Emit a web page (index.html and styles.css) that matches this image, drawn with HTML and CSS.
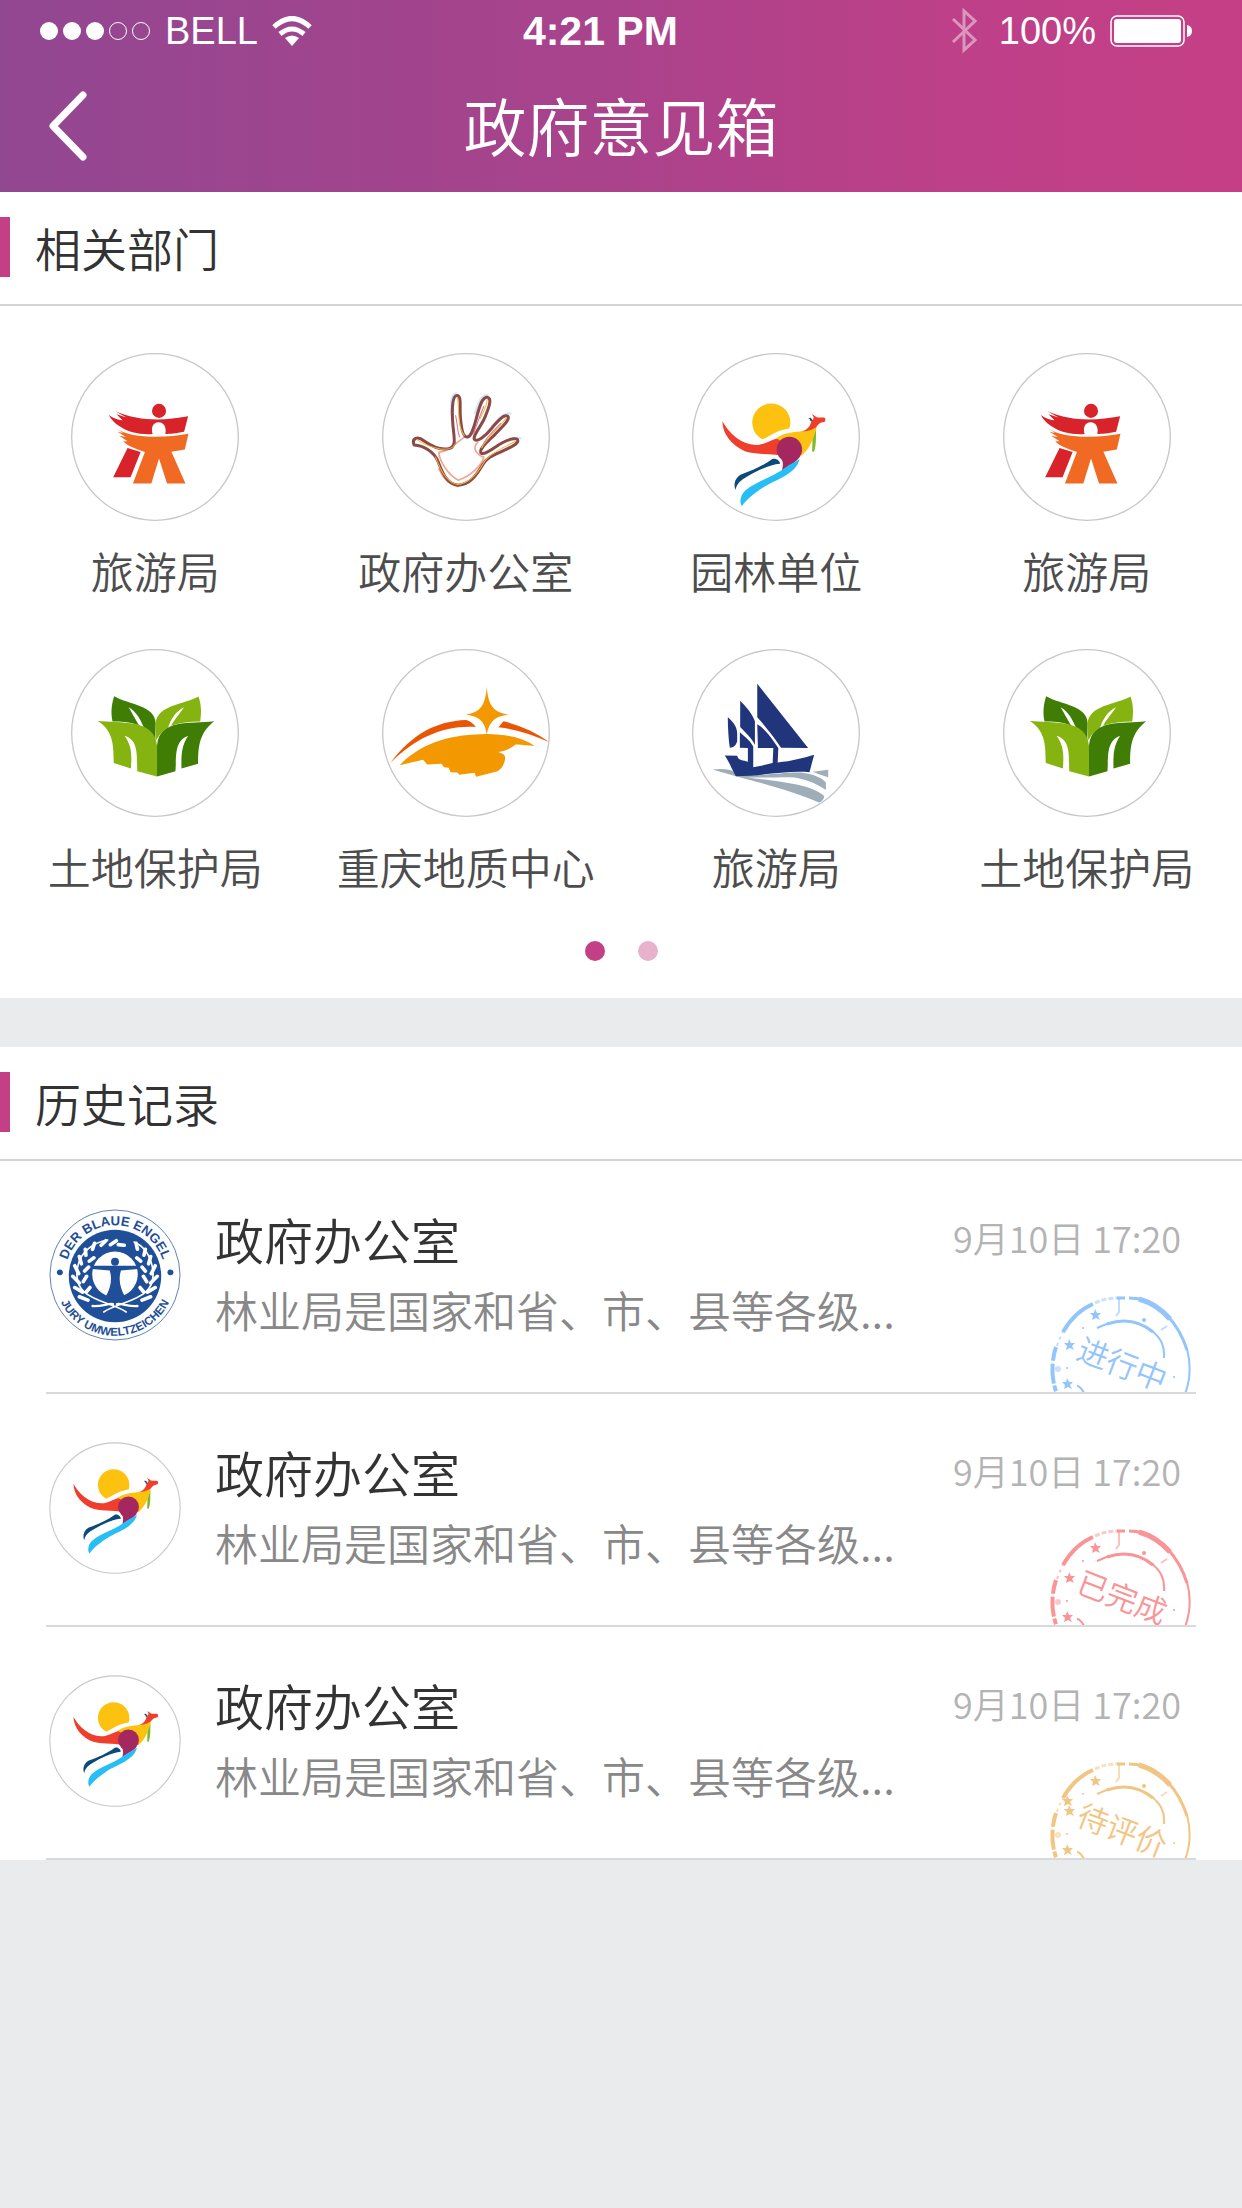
FILE: index.html
```html
<!DOCTYPE html>
<html lang="zh-CN">
<head>
<meta charset="utf-8">
<meta name="viewport" content="width=device-width, initial-scale=1">
<title>政府意见箱</title>
<link rel="stylesheet" href="styles.css">
</head>
<body>
<svg class="defs" aria-hidden="true">
  <symbol id="tour" viewBox="36 39 502 502">
    <circle class="ring" cx="287" cy="290" r="249"/>
    <circle cx="299" cy="212" r="21" fill="#d8232a"/>
    <path fill="#d8232a" d="M149 224C165 235 180 240 190 240L172 222 202 232 168 213C240 243 310 242 386 228L374 274C350 279 330 280 318 281 322 262 314 246 298 246 281 246 274 262 280 281 245 284 205 275 185 260 168 250 158 240 149 224ZM205 323L244 335 214 410 162 410Z"/>
    <path fill="#f06a23" d="M168 262C200 283 240 289 290 289 325 289 355 286 387 280L376 327 336 334 378 429 323 429 299 354 276 429 221 429 257 335C235 328 205 318 192 303L205 303 180 286 200 290 175 274 192 278Z"/>
  </symbol>
  <symbol id="hand" viewBox="36 45 502 502">
    <circle class="ring" cx="287" cy="296" r="249"/>
    <g fill="none" stroke-linejoin="round" stroke-linecap="round">
      <path stroke="#cfe8f8" stroke-width="7" d="M258 166C240 168 243 200 243 230M350 170C332 170 322 200 314 225M420 226C400 222 390 240 366 262M450 300C436 294 415 308 396 314"/>
      <path stroke="#f4a590" stroke-width="5" d="M280 298C252 318 238 336 206 342 208 372 236 410 264 425 300 412 334 382 340 356 318 350 304 328 322 312M206 392C222 425 240 440 262 444"/>
      <path stroke="#8a4a4a" stroke-width="9" d="M132 320C124 300 142 292 162 308C188 326 218 336 238 330C258 324 252 300 248 262C245 225 244 172 260 172C274 172 268 205 270 232C272 262 276 296 290 296C304 296 310 268 318 240C326 210 334 176 350 177C366 180 356 206 344 236C334 262 306 292 312 303C322 312 344 294 362 272C380 250 400 226 412 234C420 244 396 264 374 288C352 310 324 332 332 344C342 352 366 330 394 314C420 300 442 296 442 308C440 320 412 330 388 342C360 354 348 360 336 380C318 410 300 438 264 440C226 438 214 394 202 366C190 340 162 322 132 320Z"/>
      <path stroke="#f5b63a" stroke-width="3" d="M140 304C180 330 240 345 254 318M262 178C266 210 262 270 282 291M350 182C352 200 336 225 330 240M408 238C392 262 344 306 334 328M436 308C400 328 354 346 338 376C318 410 290 436 262 438C224 430 208 386 196 356"/>
      <path stroke="#d9738c" stroke-width="3" d="M256 232C262 260 262 285 268 296M340 205C330 230 320 255 310 285M390 256C372 276 348 296 338 318"/>
    </g>
  </symbol>
  <symbol id="kangaroo" viewBox="39 29 502 502">
    <circle cx="276" cy="237" r="57" fill="#fdc20f"/>
    <path fill="none" stroke="#fff" stroke-width="20" d="M240 302C275 292 290 264 350 262"/>
    <path fill="#f03e2d" d="M130 233C150 270 185 302 230 304 260 304 280 282 325 278L330 340C290 328 240 334 205 325 165 312 130 275 130 233Z"/>
    <path fill="#fdc20f" d="M290 284C330 255 378 272 412 247 404 285 390 315 366 336L320 300Z"/>
    <path fill="#f03e2d" d="M367 263C386 258 393 246 396 232 403 225 406 222 397 212 404 214 411 222 416 222L434 222C440 226 439 236 430 236 420 236 414 247 408 252 396 259 382 263 367 263Z"/>
    <path fill="#0c4a7b" d="M387 224C391 220 398 223 398 231L395 234C391 232 394 227 387 224Z"/>
    <path fill="#7db928" d="M410 256C409 280 411 300 404 324L398 323 399 290Z"/>
    <circle cx="330" cy="317" r="38" fill="#a5275f"/>
    <path fill="#a5275f" d="M303 342C312 352 312 362 308 380 330 366 352 355 360 340Z"/>
    <path fill="#0c4a7b" d="M279 346C288 342 302 350 302 360 270 362 225 385 198 402 180 412 172 424 169 438 163 424 166 404 184 393 218 380 248 368 279 346Z"/>
    <path fill="#27bdf5" d="M361 345C350 392 290 406 250 432 215 456 202 468 188 487 180 475 183 452 200 438 240 408 285 398 318 371 332 360 348 357 361 345Z"/>
  </symbol>
  <symbol id="leaf" viewBox="94 23 502 502">
    <circle class="ring" cx="345" cy="274" r="249"/>
    <path fill="#3f7d05" d="M223 164C268 190 345 190 347 245L346 298C335 280 322 268 314 262 302 235 290 210 266 197 280 220 290 240 298 252 270 240 240 240 218 240 212 210 216 185 223 164Z"/>
    <path fill="#85b410" d="M475 165C484 190 484 215 480 240 450 240 420 244 393 252 402 235 420 215 432 197 405 210 392 235 384 258 370 264 358 280 348 296L347 245C352 190 430 190 475 165Z"/>
    <path fill="#85b410" d="M174 238C240 245 345 230 351 312L351 404 292 388C290 345 298 295 254 282 278 315 275 345 273 380L222 364C220 320 225 270 174 238Z"/>
    <path fill="#3f7d05" d="M522 239C475 275 474 320 474 366L424 380C424 345 422 315 444 282 400 298 410 350 406 388L351 404 351 312C358 230 450 248 522 239Z"/>
  </symbol>
  <symbol id="geology" viewBox="37 35 502 502">
    <circle class="ring" cx="288" cy="286" r="249"/>
    <path fill="#f39800" d="M350 148C354 205 372 225 414 231 376 237 358 250 350 290 344 250 326 237 288 231 330 225 346 205 350 148Z"/>
    <path fill="#ea5504" d="M63 374C125 290 200 250 288 247 302 250 312 260 317 268 225 262 140 298 63 374ZM400 251C445 262 500 285 536 313 485 290 435 274 385 269Z"/>
    <path fill="#f39800" d="M90 382C160 310 250 290 350 289 410 290 455 300 493 324 470 325 450 318 435 321 420 334 400 342 385 343 400 350 408 350 404 368 400 385 392 396 380 401L318 417 314 405 268 411 262 404 242 403 236 390 222 388 215 378 172 380 160 366Z"/>
  </symbol>
  <symbol id="ship" viewBox="69 29 502 502">
    <circle class="ring" cx="320" cy="280" r="249"/>
    <path fill="#9fadb8" d="M130 389C160 386 180 387 200 398 250 415 340 395 395 398 430 402 460 415 469 428L469 450C440 430 400 413 360 412 310 412 260 415 230 412 320 425 420 430 464 468 464 478 455 486 448 488 380 455 260 425 190 406ZM430 396L476 390 476 412C460 408 445 402 430 396Z"/>
    <path fill="#20357c" d="M264 133L416 325 335 324C320 300 290 262 264 233ZM213 184C228 200 245 215 257 245L257 316C250 298 230 280 213 262ZM176 233C190 245 204 260 204 282L204 305C200 318 194 324 182 324 178 300 176 260 176 233ZM264 254C280 262 305 290 327 325L325 368C368 364 400 355 434 345L420 397C350 392 280 408 200 409 186 385 180 365 167 347L204 348C208 364 222 360 236 366L236 325 212 324 212 278C225 290 240 300 252 320L252 382C270 378 290 376 310 370L312 325 266 325Z"/>
  </symbol>
  <symbol id="stamp" viewBox="0 0 144 98">
    <g fill="none" stroke="currentColor">
      <path stroke-width="4" d="M14 38C22 24 32 15 44 10"/>
      <path stroke-width="3" opacity=".5" stroke-dasharray="5 2" d="M46 9C54 5 62 4 70 4"/>
      <path stroke-width="3" d="M68 4H76M80 4C90 4 98 6 106 11"/>
      <path stroke-width="5" d="M90 5C104 9 114 17 121 25"/>
      <path stroke-width="3" d="M118 21C128 32 134 43 138 56"/>
      <path stroke-width="2" d="M138 55C142 70 142 84 136 100"/>
      <path stroke-width="4" stroke-dasharray="14 3 20 2 6 3" d="M7 53C2 68 2 85 8 100"/>
      <path stroke-width="2" opacity=".6" stroke-dasharray="3 4" d="M8 52C10 46 12 42 14 38"/>
      <path stroke-width="3" d="M58 30C76 24 92 28 104 38"/>
      <path stroke-width="2" d="M48 34L60 29M102 36C112 44 116 52 115 64M28 92C32 92 34 98 36 100"/>
      <path stroke-width="2" opacity=".6" d="M70 4V18L67 22M112 36L118 32"/>
    </g>
    <g fill="currentColor">
      <circle cx="95" cy="26" r="2"/><circle cx="125" cy="83" r="1"/><circle cx="18" cy="74" r="1"/><circle cx="34" cy="34" r="1"/><circle cx="9" cy="75" r="3" opacity=".5"/>
      <path id="star" d="M46 15L48 19 52 19 49 22 51 26 47 24 43 26 44 22 41 19 45 19Z"/>
      <use href="#star" x="-26" y="30"/>
      <use href="#star" x="-28" y="69"/>
    </g>
  </symbol>
</svg>

<header class="header">
  <div class="status">
    <div class="status-side">
      <svg class="signal" viewBox="0 0 112 20" aria-hidden="true"><g fill="#fff"><circle cx="10" cy="10" r="9"/><circle cx="33" cy="10" r="9"/><circle cx="56" cy="10" r="9"/></g><g fill="none" stroke="#fff"><circle cx="79" cy="10" r="8.5"/><circle cx="102" cy="10" r="8.5"/></g></svg>
      <span>BELL</span>
      <svg class="wifi" viewBox="0 0 40 30" aria-hidden="true"><g fill="none" stroke="#fff" stroke-width="5"><path d="M2 11Q20-6 38 11"/><path d="M8 18Q20 8 32 18"/></g><path fill="#fff" d="M20 30L13 22Q20 17 27 22Z"/></svg>
    </div>
    <span class="clock">4:21 PM</span>
    <div class="status-side status-right">
      <svg class="bluetooth" viewBox="0 0 26 46" aria-hidden="true"><path fill="none" stroke="#fff" stroke-opacity=".45" stroke-width="3" d="M2 11L24 32 13 42V3L24 13 2 34"/></svg>
      <span>100%</span>
      <svg class="battery" viewBox="0 0 82 32" aria-hidden="true"><rect x="1" y="1" width="73" height="30" rx="6" fill="none" stroke="#fff" stroke-width="1.5"/><rect x="4" y="4" width="67" height="24" rx="3" fill="#fff"/><path fill="#fff" d="M77 10Q82 11 82 16T77 22Z"/></svg>
    </div>
  </div>
  <nav class="nav">
    <button class="back" type="button" aria-label="返回"><svg viewBox="0 0 40 70" aria-hidden="true"><path fill="none" stroke="#fff" stroke-width="7" stroke-linecap="round" stroke-linejoin="round" d="M35 4L5 35 35 66"/></svg></button>
    <h1>政府意见箱</h1>
  </nav>
</header>

<main>
  <section class="panel">
    <h2>相关部门</h2>
    <div class="departments">
      <a href="#"><svg><use href="#tour"/></svg>旅游局</a>
      <a href="#"><svg><use href="#hand"/></svg>政府办公室</a>
      <a href="#"><svg viewBox="39 29 502 502"><circle class="ring" cx="290" cy="280" r="249"/><use href="#kangaroo" x="39" y="29" width="502" height="502"/></svg>园林单位</a>
      <a href="#"><svg><use href="#tour"/></svg>旅游局</a>
      <a href="#"><svg><use href="#leaf"/></svg>土地保护局</a>
      <a href="#"><svg><use href="#geology"/></svg>重庆地质中心</a>
      <a href="#"><svg><use href="#ship"/></svg>旅游局</a>
      <a href="#"><svg><use href="#leaf"/></svg>土地保护局</a>
    </div>
    <div class="pager">
      <button class="dot dot-active" type="button" aria-label="第1页"></button>
      <button class="dot" type="button" aria-label="第2页"></button>
    </div>
  </section>

  <section class="panel">
    <h2>历史记录</h2>
    <ul class="records">
      <li><a class="record" href="#">
        <svg class="avatar" viewBox="58 60 400 400">
          <circle cx="258" cy="260" r="197" fill="#fff" stroke="#5b82b4" stroke-width="3"/>
          <circle cx="258" cy="263" r="140" fill="#1f4f98"/>
          <circle cx="258" cy="258" r="69" fill="#fff"/>
          <circle cx="91" cy="252" r="9" fill="#1f4f98"/><circle cx="426" cy="252" r="9" fill="#1f4f98"/>
          <circle cx="258" cy="220" r="12" fill="#1f4f98"/>
          <path fill="#1f4f98" d="M188 232H328V242L276 246C268 270 272 300 290 328H228C246 300 250 270 242 246L188 242Z"/>
          <g fill="none" stroke="#fff" stroke-linecap="round">
            <path stroke-width="5" d="M292 372C240 335 120 340 146 230 156 190 190 162 236 154M224 372C276 335 396 340 370 230 360 190 340 170 316 160"/>
            <path stroke-width="11" d="M176 336L150 326M160 312L136 298M150 284L130 264M148 256L136 232M156 226L150 204M170 200L168 182M190 182L196 164M216 170L230 156M244 168L262 156M172 310L182 298M162 280L172 264M166 248L178 236M180 218L194 208M340 336L366 326M356 312L380 298M366 284L386 264M368 256L380 232M360 226L366 204M346 200L350 182M326 182L322 164M344 310L334 298M354 280L344 264M350 248L340 236M336 218L324 208M268 168L286 170"/>
            <path stroke-width="7" d="M190 354C220 356 236 345 252 348M326 354C296 356 280 345 264 348"/>
          </g>
          <path id="arc-top" fill="none" d="M107 260A151 151 0 0 1 409 260"/>
          <path id="arc-bottom" fill="none" d="M74 260A184 184 0 0 0 442 260"/>
          <text class="seal-text"><textPath href="#arc-top" startOffset="50%" text-anchor="middle">DER BLAUE ENGEL</textPath></text>
          <text class="seal-text seal-text-small"><textPath href="#arc-bottom" startOffset="50%" text-anchor="middle">JURY UMWELTZEICHEN</textPath></text>
        </svg>
        <div class="summary"><h3>政府办公室</h3><p>林业局是国家和省、市、县等各级...</p></div>
        <div class="state ongoing"><time>9月10日 17:20</time>
          <svg class="stamp" viewBox="0 0 144 98"><use href="#stamp"/><text x="73" y="82" transform="rotate(21 73 71)">进行中</text></svg></div>
      </a></li>
      <li><a class="record" href="#">
        <svg class="avatar" viewBox="41 81 480 480"><circle class="ring" cx="281" cy="321" r="237"/><use href="#kangaroo" x="39" y="29" width="502" height="502"/></svg>
        <div class="summary"><h3>政府办公室</h3><p>林业局是国家和省、市、县等各级...</p></div>
        <div class="state done"><time>9月10日 17:20</time>
          <svg class="stamp" viewBox="0 0 144 98"><use href="#stamp"/><text x="73" y="82" transform="rotate(21 73 71)">已完成</text></svg></div>
      </a></li>
      <li><a class="record" href="#">
        <svg class="avatar" viewBox="41 81 480 480"><circle class="ring" cx="281" cy="321" r="237"/><use href="#kangaroo" x="39" y="29" width="502" height="502"/></svg>
        <div class="summary"><h3>政府办公室</h3><p>林业局是国家和省、市、县等各级...</p></div>
        <div class="state pending"><time>9月10日 17:20</time>
          <svg class="stamp" viewBox="0 0 144 98"><use href="#stamp"/><use href="#star" x="-28" y="20"/><text x="73" y="82" transform="rotate(21 73 71)">待评价</text></svg></div>
      </a></li>
    </ul>
  </section>
</main>
</body>
</html>
```
FILE: styles.css
```css
* {
  box-sizing: border-box;
}

body {
  margin: 0;
  background: #e9ebed;
  color: #333;
  font-family: "Noto Sans CJK SC", sans-serif;
  font-weight: 350;
}

h1, h2, h3, p, ul {
  margin: 0;
  padding: 0;
  font-weight: inherit;
  list-style: none;
}

a {
  color: inherit;
  text-decoration: none;
}

button {
  padding: 0;
  border: 0;
  background: none;
}

svg {
  display: block;
}

.defs {
  position: absolute;
  width: 0;
  height: 0;
}

.ring {
  fill: #fff;
  stroke: #c8c8c8;
  stroke-width: 4px;
}

/* Header */
.header {
  background: linear-gradient(90deg, #924791, #a9438c 48%, #bd4088 76%, #c53f86);
  color: #fff;
}

.status {
  display: grid;
  grid-template-columns: 16fr auto 17fr;
  align-items: center;
  height: 60px;
  padding: 2px 50px 0 39px;
  font: 38px/58px "Liberation Sans", Arial, sans-serif;
}

.status-side {
  display: flex;
  align-items: center;
  gap: 14px;
}

.status-right {
  justify-content: flex-end;
}

.clock {
  font-size: 41px;
  font-weight: bold;
}

.signal {
  width: 112px;
  height: 20px;
}

.wifi {
  width: 40px;
  height: 30px;
}

.bluetooth {
  width: 26px;
  height: 46px;
  margin-right: 8px;
}

.battery {
  width: 82px;
  height: 32px;
}

.nav {
  display: grid;
  grid-template-columns: 96px 1fr 96px;
  align-items: center;
  height: 132px;
}

.back {
  padding-left: 48px;
}

.back svg {
  width: 40px;
  height: 70px;
}

.nav h1 {
  font-size: 63px;
  line-height: 92px;
  text-align: center;
  padding-bottom: 4px;
}

/* Sections */
.panel {
  margin-bottom: 49px;
  background: #fff;
}

.panel h2 {
  display: flex;
  align-items: center;
  height: 114px;
  padding-bottom: 2px;
  border-bottom: 2px solid #d2d3d4;
  font-size: 46px;
  line-height: 60px;
}

.panel h2::before {
  content: "";
  width: 10px;
  height: 60px;
  margin-right: 25px;
  background: #c33f86;
}

.departments {
  display: grid;
  grid-template-columns: repeat(4, 1fr);
  row-gap: 44px;
  padding-top: 47px;
}

.departments a {
  display: flex;
  flex-direction: column;
  align-items: center;
  gap: 14px;
  color: #4d4d4d;
  font-size: 43px;
  line-height: 70px;
  white-space: nowrap;
}

.departments svg {
  width: 168px;
  height: 168px;
}

.pager {
  display: flex;
  justify-content: center;
  gap: 33px;
  padding: 40px 0 37px;
}

.dot {
  width: 20px;
  height: 20px;
  border-radius: 50%;
  background: #e6b2ce;
}

.dot-active {
  background: #c33f86;
}

/* History */
.records {
  padding: 0 46px;
}

.record {
  display: flex;
  padding-top: 48px;
  border-bottom: 2px solid #d8d9da;
}

.avatar {
  flex: none;
  width: 132px;
  height: 132px;
  margin: 0 34px 0 3px;
}

.summary {
  flex: 1;
  min-width: 0;
  padding-bottom: 43px;
}

.summary h3 {
  font-size: 49px;
  line-height: 60px;
}

.summary p {
  overflow: hidden;
  color: #888;
  font-size: 43px;
  line-height: 80px;
  white-space: nowrap;
}

.state {
  display: flex;
  flex-direction: column;
  justify-content: space-between;
  align-items: flex-end;
  padding-right: 3px;
}

.state time {
  padding-right: 12px;
  color: #b3b3b3;
  font-size: 36px;
  line-height: 56px;
  white-space: nowrap;
}

.stamp {
  width: 144px;
  height: 98px;
}

.stamp use {
  fill: currentColor;
}

.stamp text {
  fill: currentColor;
  font-size: 31px;
  text-anchor: middle;
}

.ongoing {
  color: #93c4fb;
}

.done {
  color: #fa9496;
}

.pending {
  color: #f1c584;
}

.seal-text {
  fill: #1f4f98;
  font: bold 40px "Liberation Sans", Arial, sans-serif;
}

.seal-text-small {
  font-size: 35px;
}
```
